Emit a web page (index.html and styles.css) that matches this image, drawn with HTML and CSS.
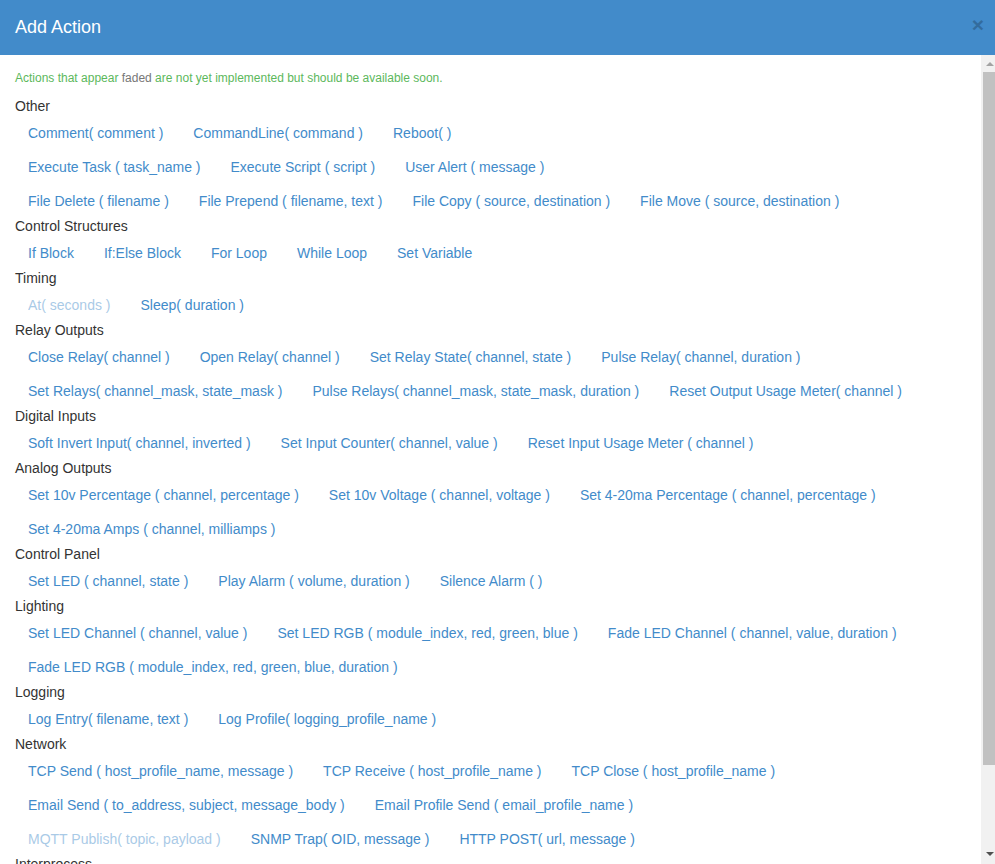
FILE: index.html
```html
<!DOCTYPE html>
<html lang="en">
<head>
    <meta charset="UTF-8">
    <meta name="viewport" content="width=device-width, initial-scale=1.0">
    <title>Add Action</title>
    <link rel="stylesheet" href="styles.css">
</head>
<body>
    <div class="modal">
        <div class="modal-header">
            <button class="close" type="button">&times;</button>
            <h4 class="modal-title">Add Action</h4>
        </div>
        <div class="modal-main">
            <div class="modal-body">
                <p class="note">Actions that appear <span class="faded-word">faded</span> are not yet implemented but should be available soon.</p>

                <h5>Other</h5>
                <div class="action-row">
                    <a class="action">Comment( comment )</a>
                    <a class="action">CommandLine( command )</a>
                    <a class="action">Reboot( )</a>
                </div>
                <div class="action-row">
                    <a class="action">Execute Task ( task_name )</a>
                    <a class="action">Execute Script ( script )</a>
                    <a class="action">User Alert ( message )</a>
                </div>
                <div class="action-row">
                    <a class="action">File Delete ( filename )</a>
                    <a class="action">File Prepend ( filename, text )</a>
                    <a class="action">File Copy ( source, destination )</a>
                    <a class="action">File Move ( source, destination )</a>
                </div>

                <h5>Control Structures</h5>
                <div class="action-row">
                    <a class="action">If Block</a>
                    <a class="action">If:Else Block</a>
                    <a class="action">For Loop</a>
                    <a class="action">While Loop</a>
                    <a class="action">Set Variable</a>
                </div>

                <h5>Timing</h5>
                <div class="action-row">
                    <a class="action disabled">At( seconds )</a>
                    <a class="action">Sleep( duration )</a>
                </div>

                <h5>Relay Outputs</h5>
                <div class="action-row">
                    <a class="action">Close Relay( channel )</a>
                    <a class="action">Open Relay( channel )</a>
                    <a class="action">Set Relay State( channel, state )</a>
                    <a class="action">Pulse Relay( channel, duration )</a>
                </div>
                <div class="action-row">
                    <a class="action">Set Relays( channel_mask, state_mask )</a>
                    <a class="action">Pulse Relays( channel_mask, state_mask, duration )</a>
                    <a class="action">Reset Output Usage Meter( channel )</a>
                </div>

                <h5>Digital Inputs</h5>
                <div class="action-row">
                    <a class="action">Soft Invert Input( channel, inverted )</a>
                    <a class="action">Set Input Counter( channel, value )</a>
                    <a class="action">Reset Input Usage Meter ( channel )</a>
                </div>

                <h5>Analog Outputs</h5>
                <div class="action-row">
                    <a class="action">Set 10v Percentage ( channel, percentage )</a>
                    <a class="action">Set 10v Voltage ( channel, voltage )</a>
                    <a class="action">Set 4-20ma Percentage ( channel, percentage )</a>
                </div>
                <div class="action-row">
                    <a class="action">Set 4-20ma Amps ( channel, milliamps )</a>
                </div>

                <h5>Control Panel</h5>
                <div class="action-row">
                    <a class="action">Set LED ( channel, state )</a>
                    <a class="action">Play Alarm ( volume, duration )</a>
                    <a class="action">Silence Alarm ( )</a>
                </div>

                <h5>Lighting</h5>
                <div class="action-row">
                    <a class="action">Set LED Channel ( channel, value )</a>
                    <a class="action">Set LED RGB ( module_index, red, green, blue )</a>
                    <a class="action">Fade LED Channel ( channel, value, duration )</a>
                </div>
                <div class="action-row">
                    <a class="action">Fade LED RGB ( module_index, red, green, blue, duration )</a>
                </div>

                <h5>Logging</h5>
                <div class="action-row">
                    <a class="action">Log Entry( filename, text )</a>
                    <a class="action">Log Profile( logging_profile_name )</a>
                </div>

                <h5>Network</h5>
                <div class="action-row">
                    <a class="action">TCP Send ( host_profile_name, message )</a>
                    <a class="action">TCP Receive ( host_profile_name )</a>
                    <a class="action">TCP Close ( host_profile_name )</a>
                </div>
                <div class="action-row">
                    <a class="action">Email Send ( to_address, subject, message_body )</a>
                    <a class="action">Email Profile Send ( email_profile_name )</a>
                </div>
                <div class="action-row">
                    <a class="action disabled">MQTT Publish( topic, payload )</a>
                    <a class="action">SNMP Trap( OID, message )</a>
                    <a class="action">HTTP POST( url, message )</a>
                </div>

                <h5>Interprocess</h5>
                <div class="action-row">
                    <a class="action">Set Shared Variable( name, value )</a>
                    <a class="action">Get Shared Variable( name )</a>
                </div>
            </div>
            <div class="scrollbar">
                <div class="scroll-btn"><span class="arrow-up"></span></div>
                <div class="scroll-thumb"></div>
                <div class="scroll-track"></div>
                <div class="scroll-btn"><span class="arrow-down"></span></div>
            </div>
        </div>
    </div>
</body>
</html>
```

FILE: styles.css
```css
html, body {
    margin: 0;
    height: 100%;
    overflow: hidden;
}

body {
    font-family: "Liberation Sans", Arial, sans-serif;
    font-size: 14px;
    line-height: 1.42857;
    color: #333;
    background: #fff;
}

.modal {
    display: flex;
    flex-direction: column;
    height: 100vh;
}

.modal-header {
    background-color: #428bca;
    color: #fff;
    padding: 15px;
    height: 25px;
    flex: none;
}

.modal-title {
    margin: 0;
    font-size: 18px;
    font-weight: normal;
    line-height: 25px;
}

.close {
    float: right;
    margin-top: -1px;
    margin-right: -4px;
    padding: 0;
    border: 0;
    background: transparent;
    font-family: "Liberation Sans", Arial, sans-serif;
    font-size: 21px;
    font-weight: bold;
    line-height: 1;
    color: #000;
    opacity: 0.22;
    cursor: pointer;
}

.modal-main {
    flex: 1;
    min-height: 0;
    display: flex;
}

.modal-body {
    flex: 1;
    overflow: hidden;
    padding: 15px;
}

/* scrollbar drawn by hand, the browser hides its own */
.scrollbar {
    width: 14px;
    flex: none;
    display: flex;
    flex-direction: column;
    background: #f1f1f1;
}

.scroll-btn {
    height: 17px;
    flex: none;
}

.arrow-up,
.arrow-down {
    display: block;
    width: 0;
    height: 0;
    margin-left: 5px;
    border-left: 4px solid transparent;
    border-right: 4px solid transparent;
}

.arrow-up {
    margin-top: 7px;
    border-bottom: 4px solid #a3a3a3;
}

.arrow-down {
    margin-top: 5px;
    border-top: 4px solid #505050;
}

.scroll-thumb {
    height: 693px;
    margin-left: 2px;
    background: #c1c1c1;
    flex: none;
}

.scroll-track {
    flex: 1;
}

.note {
    margin: 0 0 10px;
    font-size: 12px;
    line-height: 17px;
    color: #5cb85c;
}

.faded-word {
    color: #777;
}

h5 {
    margin: 0;
    font-size: 14px;
    font-weight: normal;
    line-height: 18px;
    color: #333;
}

.action-row {
    display: flex;
    gap: 4px;
}

.action {
    display: inline-block;
    padding: 7px 12px 5px;
    border: 1px solid transparent;
    line-height: 20px;
    color: #428bca;
    white-space: nowrap;
    cursor: pointer;
}

.action.disabled {
    opacity: 0.45;
    cursor: not-allowed;
}
```
